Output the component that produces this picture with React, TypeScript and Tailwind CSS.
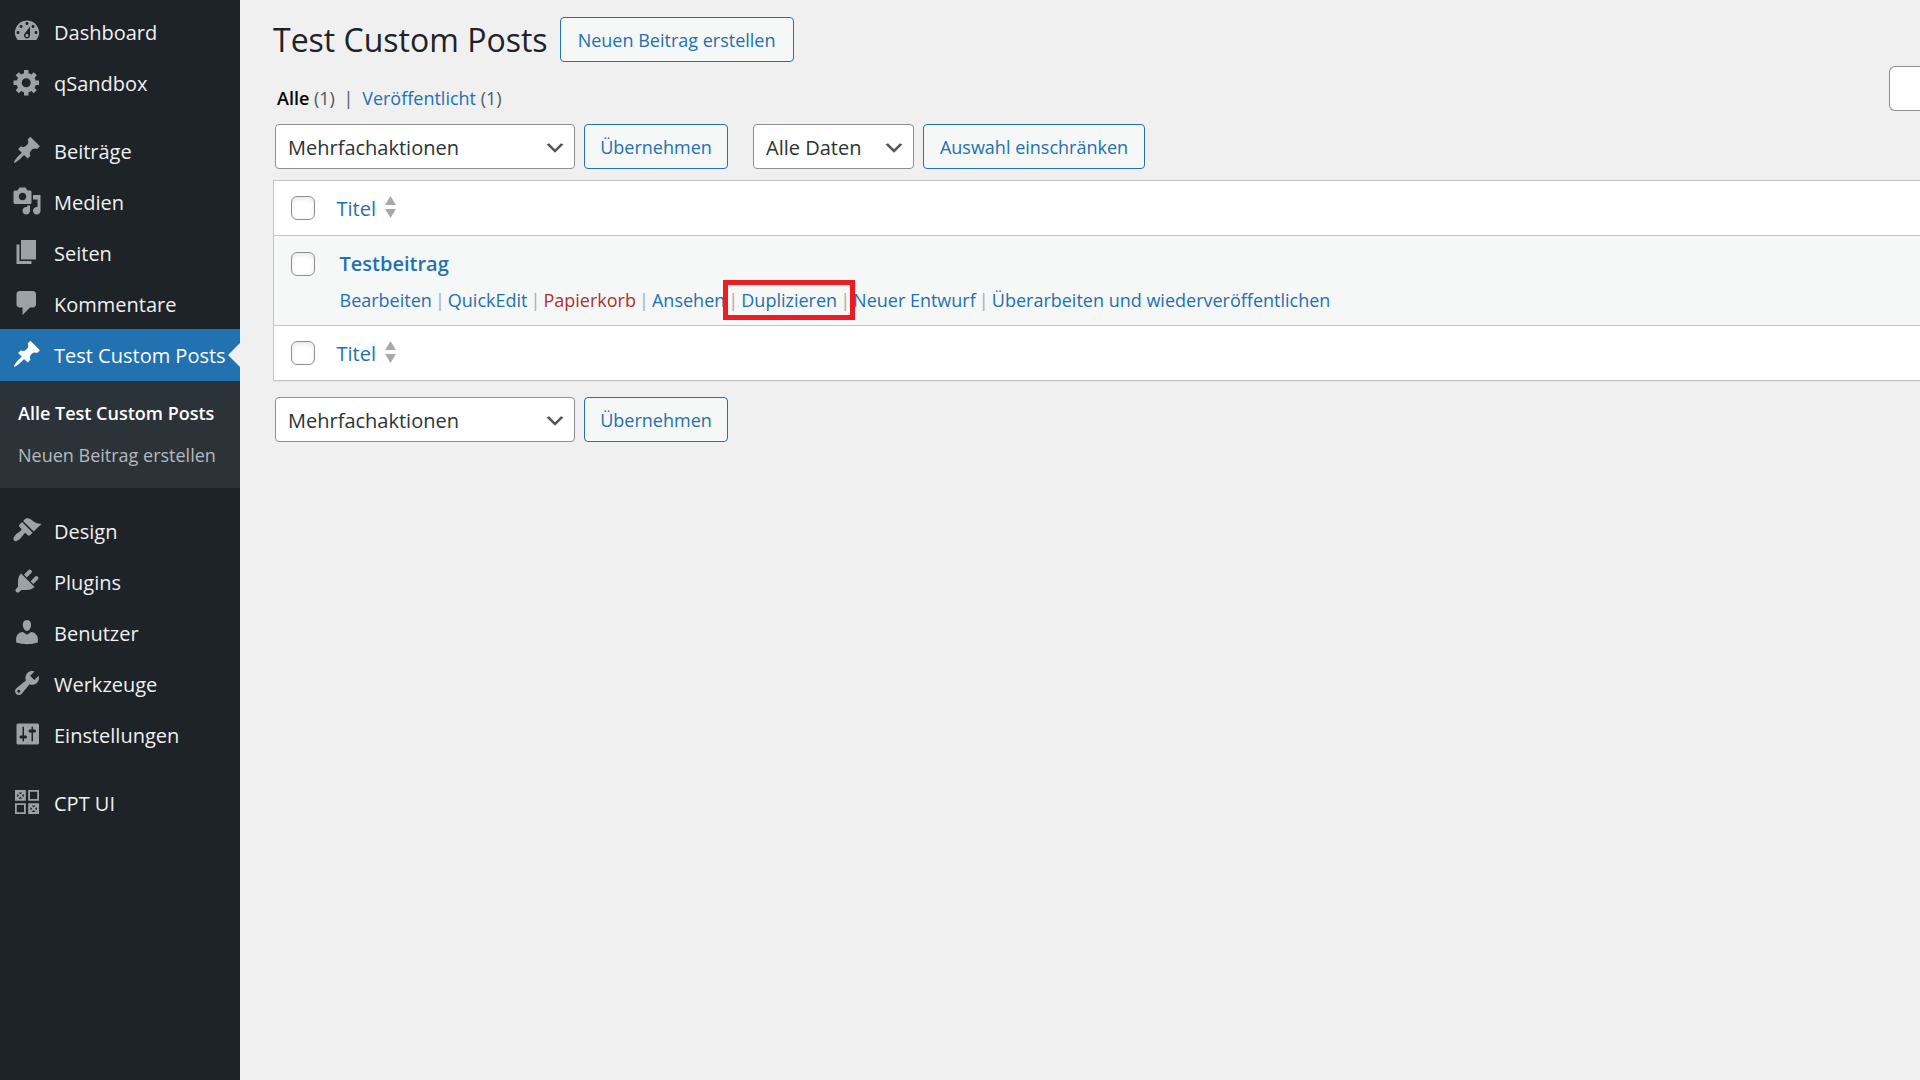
import { useId, useState } from "react";
import { clsx } from "clsx";

interface MenuItem {
  label: string;
  icon: string;
  current?: boolean;
}

// 20x20 glyphs
const icons: Record<string, string> = {
  dashboard:
    "M3.76 16h12.48A7.998 7.998 0 0 0 10 3a7.998 7.998 0 0 0-6.24 13zM10 4c.55 0 1 .45 1 1s-.45 1-1 1-1-.45-1-1 .45-1 1-1zM6 6c.55 0 1 .45 1 1s-.45 1-1 1-1-.45-1-1 .45-1 1-1zm8 0c.55 0 1 .45 1 1s-.45 1-1 1-1-.45-1-1 .45-1 1-1zm-5.37 5.55L12 7v6c0 1.1-.9 2-2 2s-2-.9-2-2c0-.57.24-1.08.63-1.45zM4 10c.55 0 1 .45 1 1s-.45 1-1 1-1-.45-1-1 .45-1 1-1zm12 0c.55 0 1 .45 1 1s-.45 1-1 1-1-.45-1-1 .45-1 1-1zm-5 3c0-.55-.45-1-1-1s-1 .45-1 1 .45 1 1 1 1-.45 1-1z",
  generic:
    "M18 12h-2.18c-.17.7-.44 1.35-.81 1.93l1.54 1.54-2.1 2.1-1.54-1.54c-.58.36-1.23.63-1.91.79V19H8v-2.18c-.68-.16-1.33-.43-1.91-.79l-1.54 1.54-2.12-2.12 1.54-1.54c-.36-.58-.63-1.23-.79-1.91H1V9.03h2.17c.16-.7.44-1.35.8-1.94L2.43 5.55l2.1-2.1 1.54 1.54c.58-.37 1.24-.64 1.93-.81V2h3v2.18c.68.16 1.33.43 1.91.79l1.54-1.54 2.12 2.12-1.54 1.54c.36.59.64 1.24.8 1.94H18V12zm-8.5 1.5c1.66 0 3-1.34 3-3s-1.34-3-3-3-3 1.34-3 3 1.34 3 3 3z",
  post:
    "M10.44 3.02l1.82-1.82 6.36 6.35-1.83 1.82c-1.05-.68-2.48-.57-3.41.36l-.75.75c-.92.93-1.04 2.35-.35 3.41l-1.83 1.82-2.41-2.41-2.8 2.79c-.42.42-3.38 2.71-3.8 2.29s1.86-3.39 2.28-3.81l2.79-2.79L4.1 9.36l1.83-1.82c1.05.69 2.48.57 3.4-.36l.75-.75c.93-.92 1.05-2.35.36-3.41z",
  media:
    "M13 11V4c0-.55-.45-1-1-1h-1.67L9 1H5L3.67 3H2c-.55 0-1 .45-1 1v7c0 .55.45 1 1 1h10c.55 0 1-.45 1-1zM7 4.5c1.38 0 2.5 1.12 2.5 2.5S8.38 9.5 7 9.5 4.5 8.38 4.5 7 5.62 4.5 7 4.5zM14 6h5v10.5c0 1.38-1.12 2.5-2.5 2.5S14 17.88 14 16.5s1.12-2.5 2.5-2.5c.17 0 .34.02.5.05V9h-3V6zm-4 8.05V13h2v3.5c0 1.38-1.12 2.5-2.5 2.5S7 17.88 7 16.5 8.12 14 9.5 14c.17 0 .34.02.5.05z",
  page: "M6 15V2h10v13H6zm-1 1h8v2H3V5h2v11z",
  comments:
    "M5 2h9c1.1 0 2 .9 2 2v7c0 1.1-.9 2-2 2h-2l-5 5v-5H5c-1.1 0-2-.9-2-2V4c0-1.1.9-2 2-2z",
  appearance:
    "M14.48 11.06L7.41 3.99l1.5-1.5c.5-.56 2.3-.47 3.51.32 1.21.8 1.43 1.28 2.91 2.1 1.18.64 2.45 1.26 4.45.85zm-.71.71L6.7 4.7 4.93 6.47c-.39.39-.39 1.02 0 1.41l1.06 1.06c.39.39.39 1.03 0 1.42-.6.6-1.43 1.11-2.21 1.69-.35.26-.7.53-1.01.84C1.43 14.23.4 16.08 1.4 17.07c.99 1 2.84-.03 4.18-1.36.31-.31.58-.66.85-1.02.57-.78 1.08-1.61 1.69-2.21.39-.39 1.02-.39 1.41 0l1.06 1.06c.39.39 1.02.39 1.41 0z",
  plugins:
    "M13.11 4.36L9.87 7.6 8 5.73l3.24-3.24c.35-.34 1.05-.2 1.56.32.52.51.66 1.21.31 1.55zm-8 1.77l.91-1.12 9.01 9.01-1.19.84c-.71.71-2.63 1.16-3.82 1.16H6.14L4.9 17.26c-.59.59-1.54.59-2.12 0-.59-.58-.59-1.53 0-2.12l1.24-1.24v-3.88c0-1.13.4-3.19 1.09-3.89zm7.26 3.97l3.24-3.24c.34-.35 1.04-.21 1.55.31.52.51.66 1.21.31 1.55l-3.24 3.25z",
  users:
    "M10 9.25c-2.27 0-2.73-3.44-2.73-3.44C7 4.02 7.82 2 9.97 2c2.16 0 2.98 2.02 2.71 3.81 0 0-.41 3.44-2.68 3.44zm0 2.57L12.72 10c2.39 0 4.52 2.33 4.52 4.53v2.49s-3.65 1.13-7.24 1.13c-3.65 0-7.24-1.13-7.24-1.13v-2.49c0-2.25 1.94-4.48 4.47-4.48z",
  tools:
    "M16.68 9.77c-1.34 1.34-3.3 1.67-4.95.99l-5.41 6.52c-.99.99-2.59.99-3.58 0s-.99-2.59 0-3.57l6.52-5.42c-.68-1.65-.35-3.61.99-4.95 1.28-1.28 3.12-1.62 4.72-1.06l-2.89 2.89 2.82 2.82 2.86-2.87c.53 1.58.18 3.39-1.08 4.65zM3.81 16.21c.4.39 1.04.39 1.43 0 .4-.4.4-1.04 0-1.43-.39-.4-1.03-.4-1.43 0-.39.39-.39 1.03 0 1.43z",
  settings:
    "M18 16V4c0-.55-.45-1-1-1H4c-.55 0-1 .45-1 1v12c0 .55.45 1 1 1h13c.55 0 1-.45 1-1zM8 11h1c.55 0 1 .45 1 1s-.45 1-1 1H8v1.5c0 .28-.22.5-.5.5s-.5-.22-.5-.5V13H6c-.55 0-1-.45-1-1s.45-1 1-1h1V5.5c0-.28.22-.5.5-.5s.5.22.5.5V11zm5-2h-1c-.55 0-1-.45-1-1s.45-1 1-1h1V5.5c0-.28.22-.5.5-.5s.5.22.5.5V7h1c.55 0 1 .45 1 1s-.45 1-1 1h-1v5.5c0 .28-.22.5-.5.5s-.5-.22-.5-.5V9z",
  cptui:
    "M2 2h7.2v7.2H2zM4.3 3.6L5.6 4.9 6.9 3.6zM3.4 4.5v2.4L4.7 5.7zM7.8 4.5L6.5 5.7 7.8 6.9zM4.3 7.8h2.6L5.6 6.5zM10.8 2H18v7.2h-7.2zM12 3.2v4.8h4.8V3.2zM2 10.8h7.2V18H2zM3.2 12v4.8H8V12zM10.8 10.8H18V18h-7.2zM13.1 12.4l1.3 1.3 1.3-1.3zM12.2 13.3v2.4l1.3-1.2zM16.6 13.3l-1.3 1.2 1.3 1.2zM13.1 16.6h2.6l-1.3-1.3z",
};

const topItems: MenuItem[] = [
  { label: "Dashboard", icon: "dashboard" },
  { label: "qSandbox", icon: "generic" },
];

const contentItems: MenuItem[] = [
  { label: "Beiträge", icon: "post" },
  { label: "Medien", icon: "media" },
  { label: "Seiten", icon: "page" },
  { label: "Kommentare", icon: "comments" },
  { label: "Test Custom Posts", icon: "post", current: true },
];

const adminItems: MenuItem[] = [
  { label: "Design", icon: "appearance" },
  { label: "Plugins", icon: "plugins" },
  { label: "Benutzer", icon: "users" },
  { label: "Werkzeuge", icon: "tools" },
  { label: "Einstellungen", icon: "settings" },
];

const MenuLink = ({ label, icon, current }: MenuItem) => (
  <li>
    <a
      href="#"
      className={clsx(
        "relative flex items-center pl-3 text-[20px] leading-7",
        current ? "h-[52px] bg-[#2271b1] text-white" : "h-[51px] text-[#f0f0f1]"
      )}
    >
      <svg
        viewBox="0 0 20 20"
        fillRule="evenodd"
        aria-hidden="true"
        className={clsx("mr-3 mb-0.5 size-[30px] shrink-0", current ? "fill-white" : "fill-[#9ca2a7]")}
      >
        <path d={icons[icon]} />
      </svg>
      <span className="pt-0.5 whitespace-nowrap">{label}</span>
      {current && (
        <span className="absolute right-0 top-1/2 -translate-y-1/2 border-y-12 border-r-12 border-y-transparent border-r-[#f0f0f1]" />
      )}
    </a>
  </li>
);

const Sidebar = () => (
  <nav className="w-60 shrink-0 bg-[#1d2327] pt-1.5">
    <ul>
      {topItems.map((item) => <MenuLink key={item.label} {...item} />)}
    </ul>

    <ul className="mt-[17px]">
      {contentItems.map((item) => <MenuLink key={item.label} {...item} />)}
    </ul>

    <ul className="bg-[#2c3338] px-[18px] pt-[11px] pb-3 text-[18px] leading-[42px] whitespace-nowrap">
      <li>
        <a href="#" className="font-semibold text-white">Alle Test Custom Posts</a>
      </li>
      <li>
        <a href="#" className="text-[#b4b9be]">Neuen Beitrag erstellen</a>
      </li>
    </ul>

    <ul className="mt-[17px]">
      {adminItems.map((item) => <MenuLink key={item.label} {...item} />)}
    </ul>

    <ul className="mt-[17px]">
      <MenuLink label="CPT UI" icon="cptui" />
    </ul>
  </nav>
);

interface ButtonProps {
  children: string;
  className: string;
}

const Button = ({ children, className }: ButtonProps) => (
  <button
    type="button"
    className={clsx(
      "h-[45px] shrink-0 rounded-[4px] border border-[#2271b1] bg-[#f6f7f7] pt-0.5 text-[18px] whitespace-nowrap text-[#2271b1]",
      className
    )}
  >
    {children}
  </button>
);

interface SelectProps {
  label: string;
  option: string;
  className: string;
}

const Select = ({ label, option, className }: SelectProps) => (
  <span className={clsx("relative block shrink-0", className)}>
    <select
      aria-label={label}
      className="h-[45px] w-full appearance-none rounded-[4px] border border-[#8c8f94] bg-white pt-0.5 pl-3 text-[20px] text-[#2c3338]"
    >
      <option>{option}</option>
    </select>
    <svg
      viewBox="0 0 20 20"
      aria-hidden="true"
      className="pointer-events-none absolute top-3 right-2 size-6 fill-[#555]"
    >
      <path d="M5 6l5 5 5-5 2 1-7 7-7-7 2-1z" />
    </svg>
  </span>
);

const BulkActions = () => (
  <div className="flex gap-[9px]">
    <Select label="Mehrfachaktion wählen" option="Mehrfachaktionen" className="w-[300px]" />
    <Button className="w-36">Übernehmen</Button>
  </div>
);

const Checkbox = ({ label }: { label: string }) => {
  const id = useId();

  return (
    <label htmlFor={id} className="block">
      <input
        id={id}
        type="checkbox"
        aria-label={label}
        className="block h-6 w-6 appearance-none rounded-[6px] border border-[#8c8f94] bg-white shadow-[inset_0_2px_4px_rgba(0,0,0,0.1)] checked:bg-[#2271b1]"
      />
    </label>
  );
};

const HeadingRow = () => (
  <tr className="h-[55px] bg-white">
    <td className="w-[63px] pl-[17px]">
      <Checkbox label="Alle auswählen" />
    </td>
    <th scope="col" className="text-left font-normal">
      <a href="#" className="inline-flex items-center gap-[9px] text-[20px] text-[#2271b1]">
        <span className="pt-0.5">Titel</span>
        <svg viewBox="0 0 11 22" aria-hidden="true" className="mb-0.5 h-[22px] w-[11px] fill-[#a7aaad]">
          <path d="M5.5 0L11 9H0zM0 13h11L5.5 22z" />
        </svg>
      </a>
    </th>
  </tr>
);

const Separator = () => <span className="inline-block w-4 text-center text-[#a7aaad]">|</span>;

const RowActions = () => (
  <div className="flex text-[18px] leading-6 whitespace-nowrap text-[#2271b1]">
    <a href="#">Bearbeiten</a>
    <Separator />
    <a href="#">QuickEdit</a>
    <Separator />
    <a href="#" className="text-[#b32d2e]">Papierkorb</a>
    <Separator />
    <a href="#">Ansehen</a>
    <span className="relative">
      <Separator />
      <a href="#">Duplizieren</a>
      <Separator />
      {/* Markierung */}
      <span className="pointer-events-none absolute -inset-x-0.5 -inset-y-2 border-5 border-[#ed1c24]" />
    </span>
    <a href="#">Neuer Entwurf</a>
    <Separator />
    <a href="#">Überarbeiten und wiederveröffentlichen</a>
  </div>
);

export default function App() {
  const [search, setSearch] = useState("");

  return (
    <div className="flex min-h-screen bg-[#f0f0f1] font-['Open_Sans','Noto_Sans',sans-serif]">
      <Sidebar />

      <main className="min-w-0 grow overflow-hidden pt-[17px] pl-[33px]">
        <div className="flex items-center gap-3">
          <h1 className="text-[32px] leading-[45px] whitespace-nowrap text-[#1d2327]">Test Custom Posts</h1>
          <Button className="w-[234px]">Neuen Beitrag erstellen</Button>
        </div>

        <div className="mt-1 flex items-end justify-between">
          <p className="pl-1 text-[18px] leading-[26px] text-[#50575e]">
            <a href="#" className="font-semibold text-black">Alle</a> (1) <span className="mx-1">|</span>{" "}
            <a href="#" className="text-[#2271b1]">Veröffentlicht</a> (1)
          </p>
          <input
            type="search"
            aria-label="Beiträge durchsuchen"
            value={search}
            onChange={(e) => setSearch(e.target.value)}
            className="h-[45px] w-[31px] rounded-l-[6px] border border-r-0 border-[#8c8f94] bg-white"
          />
        </div>

        <div className="mt-[13px] flex gap-[25px] pl-0.5">
          <BulkActions />
          <div className="flex gap-[9px]">
            <Select label="Nach Datum filtern" option="Alle Daten" className="w-[161px]" />
            <Button className="w-[222px]">Auswahl einschränken</Button>
          </div>
        </div>

        <table className="mt-[11px] w-full border-y border-l border-[#c3c4c7] shadow-[0_1px_1px_rgba(0,0,0,0.04)]">
          <thead>
            <HeadingRow />
          </thead>
          <tbody>
            <tr className="h-[90px] border-y border-[#c3c4c7] bg-[#f6f7f7]">
              <td className="pt-4 pl-[17px] align-top">
                <Checkbox label="Testbeitrag auswählen" />
              </td>
              <td className="pt-3 pl-[3px] align-top">
                <a href="#" className="block text-[20px] leading-8 font-semibold text-[#2271b1]">Testbeitrag</a>
                <div className="mt-2">
                  <RowActions />
                </div>
              </td>
            </tr>
          </tbody>
          <tfoot>
            <HeadingRow />
          </tfoot>
        </table>

        <div className="mt-4 pl-0.5">
          <BulkActions />
        </div>
      </main>
    </div>
  );
}
